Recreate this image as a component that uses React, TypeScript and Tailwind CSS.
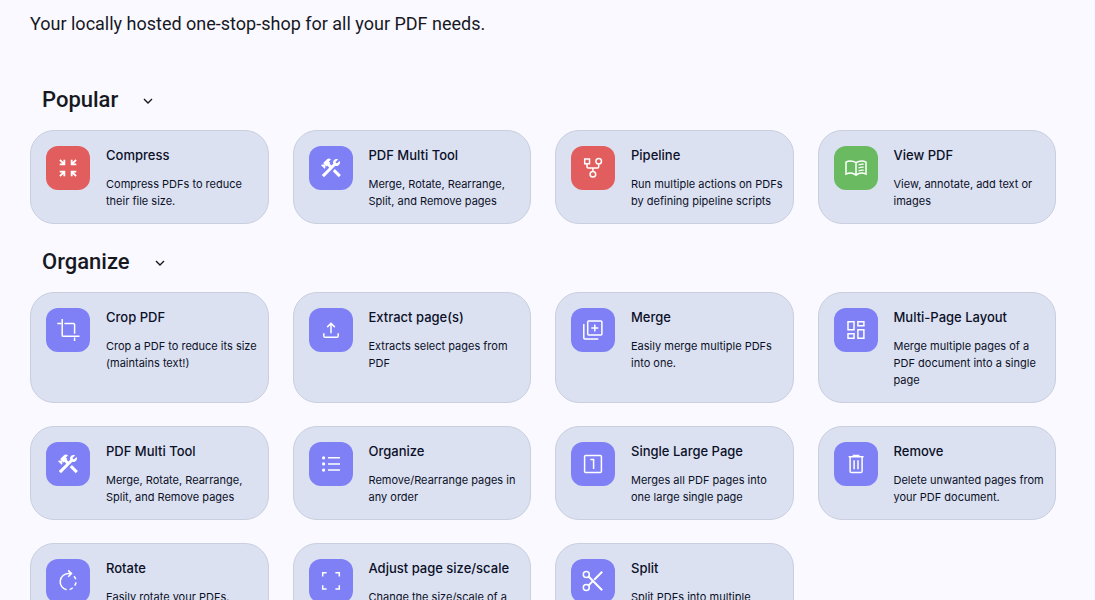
import { useState, type ReactNode } from "react";
import { MdConstruction, MdZoomInMap } from "react-icons/md";

type Tool = {
  title: string;
  text: string;
  icon: ReactNode;
  color?: string;
};

function Glyph({ children }: { children: ReactNode }) {
  return (
    <svg viewBox="0 0 24 24" className="size-6" fill="none" stroke="currentColor" strokeWidth="1.5" aria-hidden="true">
      {children}
    </svg>
  );
}

const icons = {
  compress: <MdZoomInMap className="size-[22px]" />,
  construction: <MdConstruction className="size-6" />,
  one: (
    <Glyph>
      <rect x="3.6" y="3.6" width="16.8" height="16.8" rx="1" />
      <path d="M9.3 7.6h3.3v9.4" />
    </Glyph>
  ),
  pipeline: (
    <Glyph>
      <path d="M3.7 3h4.8v4.8H3.7zM6 7.8v2.9q0 1.2 1.2 1.2h9.3q1.2 0 1.2-1.2V8.3M11.9 11.9V15" />
      <circle cx="17.7" cy="5.3" r="2.8" />
      <circle cx="11.9" cy="18.2" r="2.8" />
    </Glyph>
  ),
  book: (
    <Glyph>
      <path d="M12 6.6v12.6M12 6.6Q9.4 5 6.6 5T2 6.1v12q2.2-1 4.6-1t5.4 2.1q2.8-2.1 5.4-2.1t4.6 1v-12Q20 5 17.4 5T12 6.6z" />
      <path d="M14.5 9q2.4-1.1 5.2-.8M14.5 12q2.4-1.1 5.2-.8M14.5 15q2.4-1.1 5.2-.8" strokeWidth="1.2" />
    </Glyph>
  ),
  crop: (
    <Glyph>
      <path d="M1.3 5.5h3.9M6.2 1v16.2q0 1.1 1.1 1.1h16.2M8.4 5.5h9.1q1.1 0 1.1 1.1v9.2M18.6 19.5V23" />
    </Glyph>
  ),
  extract: (
    <Glyph>
      <path d="M12 15.3V5.4M8.2 9.1 12 5.3l3.8 3.8M4.8 15.3v2.6q0 1.3 1.3 1.3h11.8q1.3 0 1.3-1.3v-2.6" />
    </Glyph>
  ),
  merge: (
    <Glyph>
      <rect x="6.7" y="2.9" width="14.2" height="14.2" rx="1" />
      <path d="M2.8 6v13.8q0 1.1 1.1 1.1h13.4M13.8 6.5v7M10.3 10h7" />
    </Glyph>
  ),
  layout: (
    <Glyph>
      <path d="M4 3.7h6v8H4zM13.9 3.7h6v4h-6zM4 15.7h6v4.6H4zM13.9 11.7h6v8.6h-6z" />
    </Glyph>
  ),
  list: (
    <Glyph>
      <path d="M9 5.8h12M9 11.9h12M9 18.1h12" />
      <circle cx="4.6" cy="5.8" r="1.6" fill="currentColor" stroke="none" />
      <circle cx="4.6" cy="11.9" r="1.6" fill="currentColor" stroke="none" />
      <circle cx="4.6" cy="18.1" r="1.6" fill="currentColor" stroke="none" />
    </Glyph>
  ),
  trash: (
    <Glyph>
      <path d="M4.6 4.7h15M9.4 4.4v-1h5.3v1M6.1 4.7v14.6q0 1.3 1.3 1.3h9.4q1.3 0 1.3-1.3V4.7M10.1 8.3v9M14 8.3v9" />
    </Glyph>
  ),
  rotate: (
    <Glyph>
      <path d="M14.6 4.6h-2.4a8.2 8.2 0 0 0-1.6 16.2M12.2 1.4l3.3 3.2-3.3 3.2" />
      <path d="M18 7.2q1.2 1.3 1.7 3M20 13.4q-.3 1.9-1.3 3.2M16.8 18.8q-1.3 1.1-3.2 1.8" />
    </Glyph>
  ),
  scale: (
    <Glyph>
      <path d="M3.7 7.4V3.7h3.9M16.4 3.7h3.9v3.7M3.7 16.2v3.9h3.9M16.4 20.1h3.9v-3.9" />
    </Glyph>
  ),
  cut: (
    <Glyph>
      <circle cx="5.3" cy="5.4" r="3" />
      <circle cx="5.3" cy="18.5" r="3" />
      <path d="m7.3 7.3 13.9 13.9M21.2 2.8l-8 8M7.3 16.6l4-4" strokeWidth="2" />
    </Glyph>
  ),
};

const multiTool: Tool = {
  title: "PDF Multi Tool",
  text: "Merge, Rotate, Rearrange, Split, and Remove pages",
  icon: icons.construction,
};

const popular: Tool[] = [
  { title: "Compress", text: "Compress PDFs to reduce their file size.", icon: icons.compress, color: "bg-[#e25d5d]" },
  multiTool,
  { title: "Pipeline", text: "Run multiple actions on PDFs by defining pipeline scripts", icon: icons.pipeline, color: "bg-[#e25d5d]" },
  { title: "View PDF", text: "View, annotate, add text or images", icon: icons.book, color: "bg-[#69ba61]" },
];

const organize: Tool[] = [
  { title: "Crop PDF", text: "Crop a PDF to reduce its size (maintains text!)", icon: icons.crop },
  { title: "Extract page(s)", text: "Extracts select pages from PDF", icon: icons.extract },
  { title: "Merge", text: "Easily merge multiple PDFs into one.", icon: icons.merge },
  { title: "Multi-Page Layout", text: "Merge multiple pages of a PDF document into a single page", icon: icons.layout },
  multiTool,
  { title: "Organize", text: "Remove/Rearrange pages in any order", icon: icons.list },
  { title: "Single Large Page", text: "Merges all PDF pages into one large single page", icon: icons.one },
  { title: "Remove", text: "Delete unwanted pages from your PDF document.", icon: icons.trash },
  { title: "Rotate", text: "Easily rotate your PDFs.", icon: icons.rotate },
  { title: "Adjust page size/scale", text: "Change the size/scale of a page and/or its contents.", icon: icons.scale },
  { title: "Split", text: "Split PDFs into multiple documents", icon: icons.cut },
];

function ToolCard({ title, text, icon, color = "bg-[#7f80f5]" }: Tool) {
  return (
    <a href="#" className="flex items-start gap-4 rounded-3xl border border-[#c9cfdf] bg-[#dbe1f0] pt-[15px] pr-1.5 pb-[13px] pl-[15px] text-[#0b1029]">
      <span className={`flex size-11 shrink-0 items-center justify-center rounded-xl text-white ${color}`}>{icon}</span>
      <span className="min-w-0">
        <span className="block text-[13px] leading-[18px] font-medium">{title}</span>
        <span className="mt-3 block text-[11px] leading-[17px]">{text}</span>
      </span>
    </a>
  );
}

function Section({ name, tools }: { name: string; tools: Tool[] }) {
  const [open, setOpen] = useState(true);

  return (
    <section className="mb-6">
      <h2 className="mb-4">
        <button
          type="button"
          aria-expanded={open}
          onClick={() => setOpen(!open)}
          className="flex items-center gap-6 pl-3 font-['Roboto',sans-serif] text-[22px] leading-7 font-medium"
        >
          {name}
          <svg viewBox="0 0 12 12" className={open ? "size-3" : "size-3 -rotate-90"} fill="none" stroke="currentColor" strokeWidth="1.4" aria-hidden="true">
            <path d="m2 5 4 4 4-4" />
          </svg>
        </button>
      </h2>
      {open && (
        <div className="grid grid-cols-4 gap-x-6 gap-y-[23px]">
          {tools.map((tool) => (
            <ToolCard key={tool.title} {...tool} />
          ))}
        </div>
      )}
    </section>
  );
}

export default function App() {
  return (
    <main className="h-screen overflow-hidden bg-[#f9f9ff] pr-[39px] pl-[30px] font-['Inter',sans-serif] text-[#17181f]">
      <h1 className="-mt-[43px] text-4xl leading-[44px] font-medium">Stirling PDF</h1>
      <p className="mt-[11px] mb-[50px] font-['Roboto',sans-serif] text-lg leading-6">Your locally hosted one-stop-shop for all your PDF needs.</p>
      <Section name="Popular" tools={popular} />
      <Section name="Organize" tools={organize} />
    </main>
  );
}
